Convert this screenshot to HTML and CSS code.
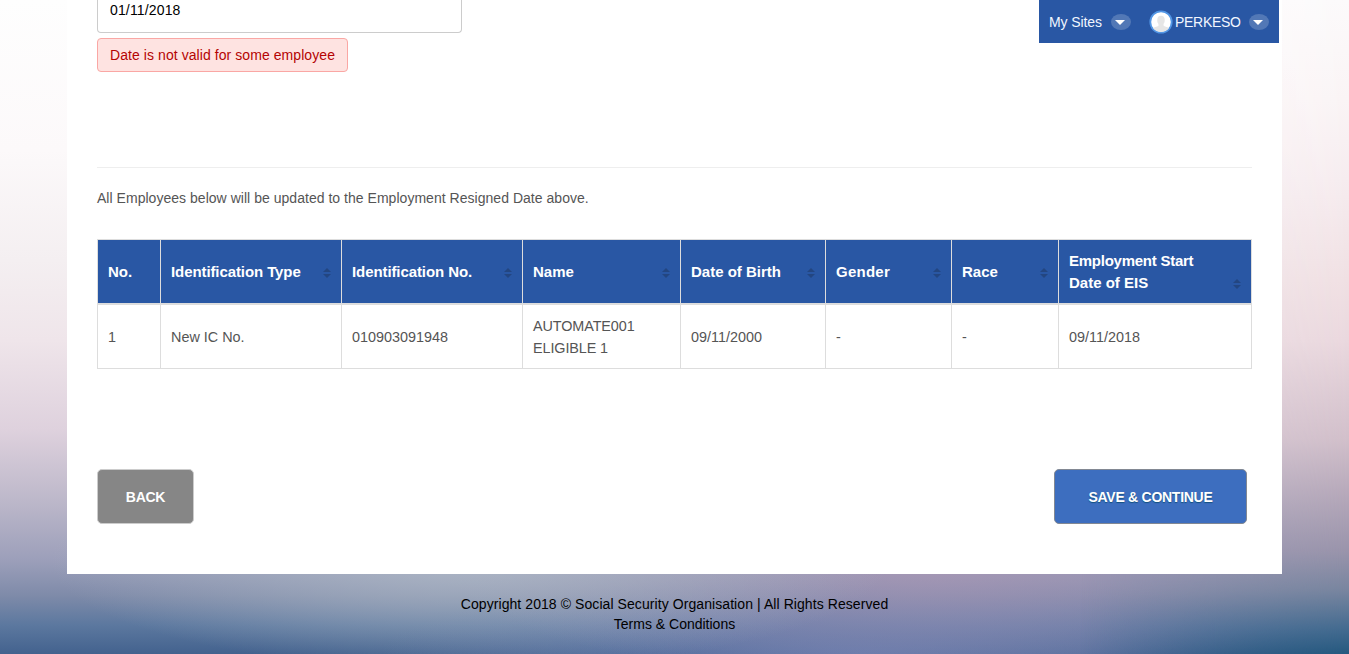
FILE: index.html
```html
<!DOCTYPE html>
<html lang="en">
<head>
<meta charset="utf-8">
<title>Employment Resigned Date</title>
<link rel="stylesheet" href="styles.css">
</head>
<body>
<nav class="dockbar">
  <a class="dock-item sites">My Sites</a>
  <span class="caret"></span>
  <svg class="avatar" width="24" height="24" viewBox="0 0 24 24"><circle cx="12" cy="12" r="10.7" fill="#fff" stroke="#5296e5" stroke-width="1.8"/><path d="M4 18c2-1.2 5-1.3 5.600-2.600l-.2-1.500C7.800 12 8.200 10 8.500 8.200C9.200 4.900 14.800 4.900 15.500 8.200c.4 2 .4 4-1 5.800v1.500c.8 1.200 3.700 1.300 5.500 2.500-3.500 5.300-12.500 5.300-16 0z" fill="#e6e6e6"/></svg>
  <a class="dock-item user">PERKESO</a>
  <span class="caret user-caret"></span>
</nav>
<main class="panel">
  <div class="date-field">01/11/2018</div>
  <div class="error">Date is not valid for some employee</div>
  <hr class="rule">
  <p class="note">All Employees below will be updated to the Employment Resigned Date above.</p>
  <table class="employees">
    <colgroup><col class="c-no"><col class="c-type"><col class="c-id"><col class="c-name"><col class="c-dob"><col class="c-gender"><col class="c-race"><col class="c-start"></colgroup>
    <thead>
      <tr>
        <th>No.</th>
        <th><div class="head"><span class="snug">Identification Type</span><i class="sort"></i></div></th>
        <th><div class="head"><span class="snug">Identification No.</span><i class="sort"></i></div></th>
        <th><div class="head"><span>Name</span><i class="sort"></i></div></th>
        <th><div class="head"><span>Date of Birth</span><i class="sort"></i></div></th>
        <th><div class="head"><span class="loose">Gender</span><i class="sort"></i></div></th>
        <th><div class="head"><span>Race</span><i class="sort"></i></div></th>
        <th><div class="head"><span><span class="tight">Employment Start</span><br>Date of EIS</span><i class="sort"></i></div></th>
      </tr>
    </thead>
    <tbody>
      <tr><td>1</td><td>New IC No.</td><td>010903091948</td><td class="name">AUTOMATE001<br>ELIGIBLE 1</td><td>09/11/2000</td><td>-</td><td>-</td><td>09/11/2018</td></tr>
    </tbody>
  </table>
  <div class="actions">
    <button class="btn back">BACK</button>
    <button class="btn save">SAVE &amp; CONTINUE</button>
  </div>
</main>
<footer class="footer">
  <div class="copyright">Copyright 2018 © Social Security Organisation | All Rights Reserved</div>
  <div class="terms">Terms &amp; Conditions</div>
</footer>
</body>
</html>
```
FILE: styles.css
```css
* { box-sizing: border-box; }
body {
  margin: 0;
  height: 654px;
  overflow: hidden;
  position: relative;
  font: 14px/20px "Liberation Sans", Arial, sans-serif;
  color: #555;
  background:
    radial-gradient(ellipse 420px 110px at 470px 560px, rgba(178,188,200,.8), rgba(178,188,200,.45) 45%, rgba(178,188,200,0)),
    radial-gradient(ellipse 480px 110px at 930px 570px, rgba(170,150,180,.75), rgba(165,150,182,.45) 45%, rgba(170,148,178,0)),
    radial-gradient(ellipse 480px 80px at 860px 654px, rgba(104,124,175,.85), rgba(104,124,175,.45) 50%, rgba(104,124,175,0)),
    linear-gradient(#fefefe 0, #fcf9fa 150px, #f4eff1 260px, #efe5ea 340px, #ded1dd 430px, #bdb8ca 500px, #9c9fba 560px, #7f8ba9 595px, #5c789f 625px, #43628e 654px);
}
body::before {
  content: "";
  position: absolute;
  inset: 0;
  background: linear-gradient(#fcfafb 0, #faf4f5 100px, #f6ecef 180px, #f0e0e3 280px, #ead8de 340px, #d1bfca 440px, #b8aabb 490px, #9a94ab 550px, #78859f 590px, #426a8f 630px, #25597f 654px);
  -webkit-mask-image: linear-gradient(90deg, transparent 1080px, rgba(0,0,0,.75) 1282px, #000 1349px);
  mask-image: linear-gradient(90deg, transparent 1080px, rgba(0,0,0,.75) 1282px, #000 1349px);
}
.dockbar {
  position: absolute;
  z-index: 2;
  top: 0;
  left: 1039px;
  width: 240px;
  height: 43px;
  padding: 1px 0 0 10px;
  display: flex;
  align-items: center;
  background: #2957a4;
  color: #f1f6ff;
}
.sites { width: 62px; letter-spacing: -.1px; }
.user { width: 66px; letter-spacing: -.3px; }
.caret {
  flex: none;
  width: 20px;
  height: 16px;
  border-radius: 50%;
  background: #5278b6;
  display: flex;
  justify-content: center;
  align-items: center;
}
.caret::after {
  content: "";
  border: 5px solid transparent;
  border-top-color: #fff;
  border-bottom: 0;
  margin-right: 3px;
}
.avatar { flex: none; margin: 0 2px 0 18px; }
.user-caret { margin-left: 8px; }
.panel {
  position: relative;
  width: 1215px;
  height: 574px;
  margin: 0 67px;
  padding: 0 30px;
  background: #fff;
}
.date-field {
  width: 365px;
  height: 33px;
  padding: 0 12px;
  border: 1px solid #ccc;
  border-top: 0;
  border-radius: 0 0 4px 4px;
  color: #000;
  letter-spacing: .15px;
}
.error {
  width: 251px;
  height: 34px;
  margin-top: 5px;
  padding: 6px 12px;
  border: 1px solid #faa7a4;
  border-radius: 4px;
  background: #fee3e1;
  color: #b50303;
  white-space: nowrap;
  letter-spacing: .07px;
}
.rule {
  margin: 95px 0 20px;
  border: 0;
  border-top: 1px solid #eee;
}
.note { margin: 0 0 31px; letter-spacing: .03px; }
.employees {
  width: 1155px;
  table-layout: fixed;
  border-collapse: separate;
  border-spacing: 0;
  font-size: 15px;
  line-height: 22px;
}
.c-no { width: 63px; }
.c-type, .c-id { width: 181px; }
.c-name { width: 158px; }
.c-dob { width: 145px; }
.c-gender { width: 126px; }
.c-race { width: 107px; }
.c-start { width: 194px; }
th, td {
  padding: 0 10px;
  border-left: 1px solid #ddd;
  border-bottom: 1px solid #ddd;
  text-align: left;
  white-space: nowrap;
}
th:last-child, td:last-child { border-right: 1px solid #ddd; }
th {
  height: 66px;
  padding-top: 1px;
  border-top: 1px solid #ddd;
  border-bottom-width: 2px;
  background: #2957a4;
  color: #fff;
}
td { height: 64px; padding-top: 1px; font-size: 14.4px; }
.name { letter-spacing: -.1px; }
.snug { letter-spacing: -.09px; }
.tight { letter-spacing: -.25px; }
.loose { letter-spacing: .25px; }
.head { display: flex; justify-content: space-between; align-items: flex-end; }
.sort {
  display: flex;
  flex-direction: column;
  gap: 2px;
  margin-bottom: 5px;
}
.sort::before, .sort::after { content: ""; border: 4px solid transparent; }
.sort::before { border-top: 0; border-bottom-color: #234681; }
.sort::after { border-bottom: 0; border-top-color: #234681; }
.actions {
  display: flex;
  justify-content: space-between;
  padding-right: 5px;
  margin-top: 100px;
}
.btn {
  height: 55px;
  padding: 1px 0 0;
  border-radius: 5px;
  color: #fff;
  font: bold 14px/20px "Liberation Sans", Arial, sans-serif;
  letter-spacing: -.27px;
}
.back { width: 97px; border: 1px solid #ccc; background: #868686; }
.save { width: 193px; border: 1px solid #828893; background: #3d6ebf; text-shadow: 0 1px 1px #13507f; }
.footer {
  position: relative;
  padding-top: 20px;
  text-align: center;
  color: #000;
}
.copyright { letter-spacing: .075px; }
```
